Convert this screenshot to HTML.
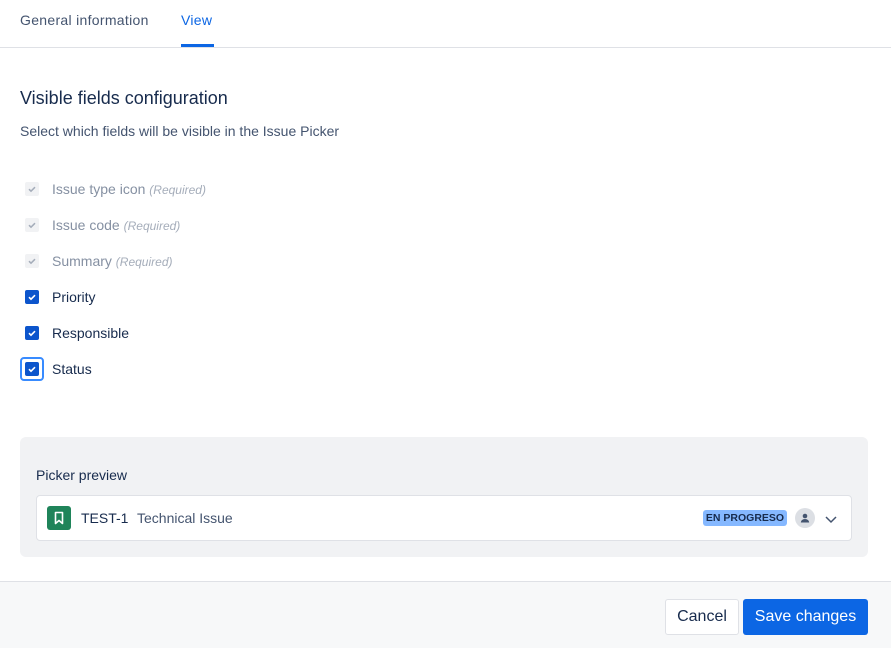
<!DOCTYPE html>
<html><head><style>
*{box-sizing:border-box;margin:0;padding:0}
body{width:891px;height:648px;background:#fff;font-family:"Liberation Sans",sans-serif;color:#172b4d;position:relative;overflow:hidden}
.tabs{height:48px;border-bottom:1px solid #dfe1e6;position:relative}
.tab{position:absolute;top:12px;font-size:14px;color:#44546f}
.tab.a{color:#0c66e4}
.ul{position:absolute;left:181px;top:44px;width:33px;height:3px;background:#0c66e4}
h2{position:absolute;left:20px;top:88px;font-size:18px;font-weight:400;color:#172b4d}
.sub{position:absolute;left:20px;top:123px;font-size:14px;color:#44546f}
.row{position:absolute;left:25px;font-size:14px;color:#172b4d;height:16px}
.cb{position:absolute;left:0;top:0;width:14px;height:14px;border-radius:2px;background:#0c55cc}
.cb.d{background:#f1f2f4}
.row span.l{position:absolute;left:27px;top:-1px;white-space:nowrap}
.row.dis span.l{color:#8590a2}
.req{font-style:italic;font-size:12px;color:#a5adba}
.focus{position:absolute;left:-5px;top:-5px;width:24px;height:24px;border:2px solid #388bff;border-radius:4px}
.panel{position:absolute;left:20px;top:437px;width:848px;height:120px;background:#f1f2f4;border-radius:6px}
.pl{position:absolute;left:16px;top:30px;font-size:14px;color:#172b4d}
.card{position:absolute;left:16px;top:58px;width:816px;height:46px;background:#fff;border:1px solid #dfe1e6;border-radius:4px}
.ic{position:absolute;left:10px;top:10px;width:24px;height:24px;background:#1f845a;border-radius:3px}
.key{position:absolute;left:44px;top:14px;font-size:14px;color:#172b4d}
.sum{position:absolute;left:100px;top:14px;font-size:14px;color:#44546f}
.lz{position:absolute;left:666px;top:14px;width:84px;height:16px;background:#85b8ff;border-radius:3px;font-size:10.5px;font-weight:700;color:#172b4d;line-height:16px;text-align:center;white-space:nowrap}
.av{position:absolute;left:758px;top:12px;width:20px;height:20px;border-radius:50%;background:#dcdfe4}
.foot{position:absolute;left:0;top:581px;width:891px;height:67px;background:#f7f8f9;border-top:1px solid #dfe1e6}
.btn{position:absolute;top:17px;height:36px;border-radius:3px;font-size:16px;line-height:34px;text-align:center}
</style></head><body>
<div class="tabs">
<div class="tab" style="left:20px;letter-spacing:0.3px">General information</div>
<div class="tab a" style="left:181px;letter-spacing:0.3px">View</div>
<div class="ul"></div>
</div>
<h2>Visible fields configuration</h2>
<div class="sub">Select which fields will be visible in the Issue Picker</div>

<div class="row dis" style="top:182px"><div class="cb d"><svg width="14" height="14"><path d="M4 7.2l2 2 4-4" stroke="#a5adba" stroke-width="1.5" fill="none"/></svg></div><span class="l">Issue type icon <span class="req">(Required)</span></span></div>
<div class="row dis" style="top:218px"><div class="cb d"><svg width="14" height="14"><path d="M4 7.2l2 2 4-4" stroke="#a5adba" stroke-width="1.5" fill="none"/></svg></div><span class="l">Issue code <span class="req">(Required)</span></span></div>
<div class="row dis" style="top:254px"><div class="cb d"><svg width="14" height="14"><path d="M4 7.2l2 2 4-4" stroke="#a5adba" stroke-width="1.5" fill="none"/></svg></div><span class="l">Summary <span class="req">(Required)</span></span></div>
<div class="row" style="top:290px"><div class="cb"><svg width="14" height="14"><path d="M4 7.2l2 2 4-4" stroke="#fff" stroke-width="1.6" fill="none"/></svg></div><span class="l">Priority</span></div>
<div class="row" style="top:326px"><div class="cb"><svg width="14" height="14"><path d="M4 7.2l2 2 4-4" stroke="#fff" stroke-width="1.6" fill="none"/></svg></div><span class="l">Responsible</span></div>
<div class="row" style="top:362px"><div class="focus"></div><div class="cb"><svg width="14" height="14"><path d="M4 7.2l2 2 4-4" stroke="#fff" stroke-width="1.6" fill="none"/></svg></div><span class="l">Status</span></div>

<div class="panel">
<div class="pl">Picker preview</div>
<div class="card">
<div class="ic"><svg width="24" height="24"><path d="M8.5 6.5h7v11l-3.5-3-3.5 3z" stroke="#fff" stroke-width="1.6" fill="none" stroke-linejoin="round"/></svg></div>
<div class="key">TEST-1</div>
<div class="sum">Technical Issue</div>
<div class="lz">EN PROGRESO</div>
<div class="av"><svg width="20" height="20"><circle cx="10" cy="8" r="2.3" fill="#44546f"/><path d="M5.8 14.5a4.2 3.5 0 0 1 8.4 0z" fill="#44546f"/></svg></div>
<svg style="position:absolute;left:787px;top:16px" width="14" height="14"><path d="M2 5l5 5 5-5" stroke="#44546f" stroke-width="1.5" fill="none"/></svg>
</div>
</div>

<div class="foot">
<div class="btn" style="left:665px;width:74px;background:#fff;border:1px solid #dfe1e6;color:#172b4d">Cancel</div>
<div class="btn" style="left:743px;width:125px;background:#0c66e4;color:#fff;line-height:36px">Save changes</div>
</div>
</body></html>
